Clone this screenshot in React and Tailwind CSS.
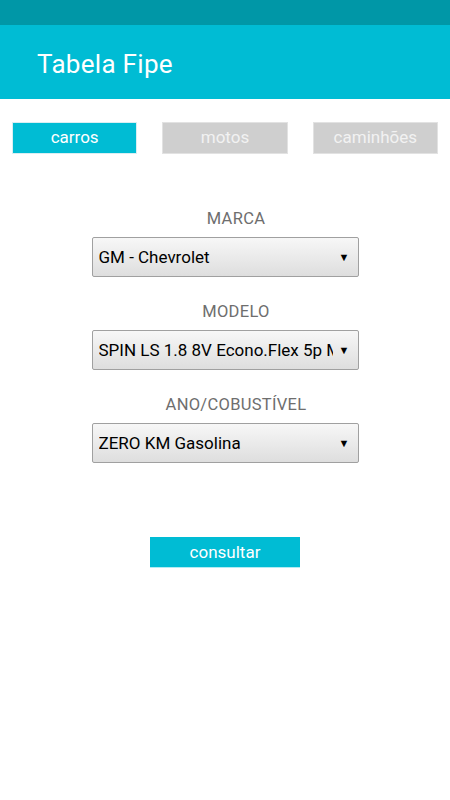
import React from 'react';

const tabs = [
  { label: 'carros', active: true },
  { label: 'motos', active: false },
  { label: 'caminhões', active: false },
];

const fields = [
  { label: 'MARCA', value: 'GM - Chevrolet' },
  { label: 'MODELO', value: 'SPIN LS 1.8 8V Econo.Flex 5p Mec.' },
  { label: 'ANO/COBUSTÍVEL', value: 'ZERO KM Gasolina' },
];

const Spinner = ({ value }) => (
  <div className="flex items-center h-[40px] w-[267px] border border-[#a0a0a0] rounded-[2px] bg-gradient-to-b from-[#f7f7f7] to-[#dedede] pl-[6px] pr-[8px]">
    <div className="flex-1 overflow-hidden whitespace-nowrap text-[17px] text-black leading-none">
      {value}
    </div>
    <span className="ml-[6px] text-[11px] text-black leading-none">▼</span>
  </div>
);

export default function App() {
  return (
    <div className="w-[450px] h-[800px] bg-white flex flex-col font-['Roboto',sans-serif]">
      {/* status bar + toolbar */}
      <div className="h-[25px] bg-[#0097a7]" />
      <div className="h-[74px] bg-[#00bcd4] flex items-center pl-[37px]">
        <h1 className="text-[26px] text-white font-normal tracking-[0.3px] pt-[4px]">Tabela Fipe</h1>
      </div>

      {/* tabs */}
      <div className="flex gap-[25px] px-[12px] mt-[23px]">
        {tabs.map((tab) => (
          <div
            key={tab.label}
            className={`w-[126px] h-[32px] flex items-center justify-center text-[17px] border ${
              tab.active
                ? 'bg-[#00bcd4] border-[#d9eef2] text-white'
                : 'bg-[#cfcfcf] border-[#e2e2e2] text-[#f2f2f2]'
            }`}
          >
            {tab.label}
          </div>
        ))}
      </div>

      {/* form */}
      <div className="flex flex-col items-center mt-[57px] gap-[27px]">
        {fields.map((f) => (
          <div key={f.label} className="flex flex-col items-center gap-[9px]">
            <div className="ml-[22px] text-[16.5px] text-[#6e6e6e] leading-none h-[17px] tracking-[0.3px]">{f.label}</div>
            <Spinner value={f.value} />
          </div>
        ))}
      </div>

      <div className="flex justify-center mt-[74px]">
        <button className="w-[150px] h-[31px] bg-[#00bcd4] border-b border-[#b2ebf2] text-white text-[17px] leading-none">
          consultar
        </button>
      </div>
    </div>
  );
}
